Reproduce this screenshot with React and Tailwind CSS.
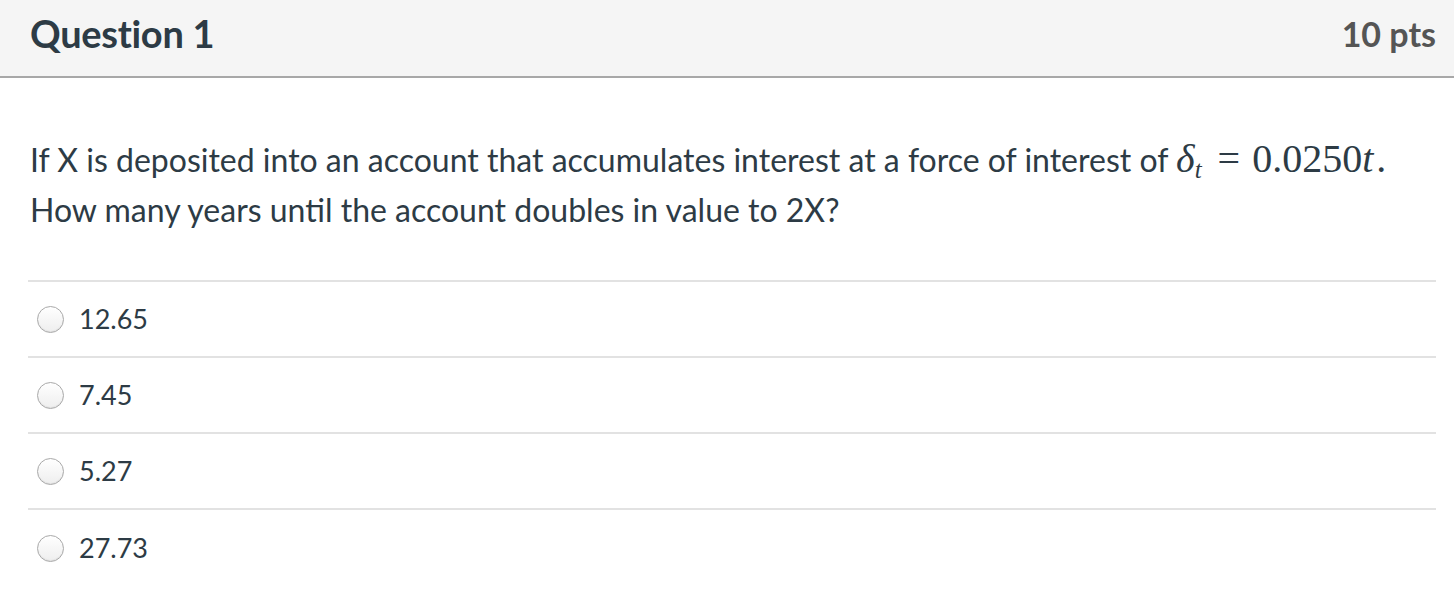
const answers = ['12.65', '7.45', '5.27', '27.73'];

function Radio() {
  return (
    <span className="w-[27px] h-[27px] rounded-full border border-[#a9a9a9] bg-gradient-to-b from-white to-[#eeeeee] shadow-[inset_0_-1px_1px_rgba(0,0,0,0.06)] shrink-0" />
  );
}

export default function App() {
  return (
    <div className="w-[1454px] h-[600px] bg-white text-[#2d3b45] font-['Lato',sans-serif] overflow-hidden">
      <div className="h-[78px] bg-[#f5f5f5] border-b-2 border-[#a8a8a8] flex items-center justify-between px-[30px] pb-[10px]">
        <h2 className="text-[38px] font-bold tracking-[-0.3px]">Question 1</h2>
        <span className="text-[34px] font-bold text-[#555555] -mr-[12px]">10 pts</span>
      </div>

      <div className="px-[28px] pt-[57px]">
        <p className="text-[32px] leading-[50px] px-[2px]">
          If X is deposited into an account that accumulates interest at a force of interest of{' '}
          <span className="font-['Liberation_Serif',serif] text-[40px] leading-none whitespace-nowrap">
            <i>δ</i>
            <sub className="text-[25px] italic leading-none">t</sub>
            <span className="ml-[16px] mr-[12px]">=</span>
            0.0250<i>t</i>
            <span className="ml-[3px]">.</span>
          </span>
          <br />
          How many years until the account doubles in value to 2X?
        </p>

        <div className="mt-[45px] border-t-2 border-[#e2e2e2] w-[1408px]">
          {answers.map((a) => (
            <div key={a} className="h-[76px] flex items-center gap-[15px] pl-[9px] border-b-2 border-[#e2e2e2] last:border-b-0">
              <Radio />
              <span className="text-[27px]">{a}</span>
            </div>
          ))}
        </div>
      </div>
    </div>
  );
}
